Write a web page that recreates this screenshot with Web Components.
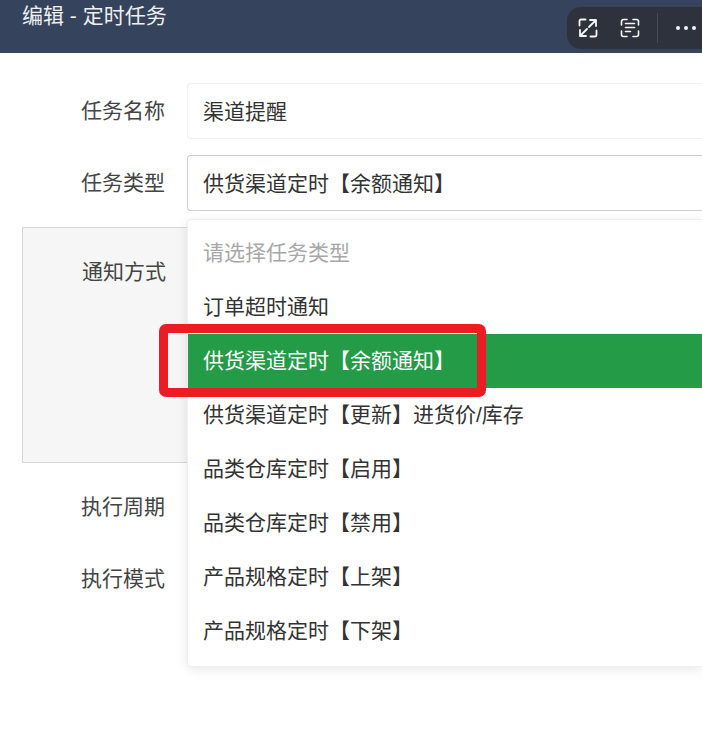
<!DOCTYPE html>
<html lang="zh">
<head>
<meta charset="utf-8">
<title>编辑 - 定时任务</title>
<style>
  html, body { margin: 0; height: 729px; overflow: hidden; background: #fff; }
  body { font-family: "Liberation Sans", "Noto Sans CJK SC", sans-serif; }
</style>
</head>
<body>
<task-dialog heading="编辑 - 定时任务">
  <window-tools slot="tools"></window-tools>
  <form-row label="任务名称"><text-field>渠道提醒</text-field></form-row>
  <form-row label="任务类型">
    <text-field active>供货渠道定时【余额通知】</text-field>
    <option-menu slot="overlay">
      <option-item muted>请选择任务类型</option-item>
      <option-item>订单超时通知</option-item>
      <option-item selected>供货渠道定时【余额通知】<mark-box></mark-box></option-item>
      <option-item>供货渠道定时【更新】进货价/库存</option-item>
      <option-item>品类仓库定时【启用】</option-item>
      <option-item>品类仓库定时【禁用】</option-item>
      <option-item>产品规格定时【上架】</option-item>
      <option-item>产品规格定时【下架】</option-item>
    </option-menu>
  </form-row>
  <notice-panel label="通知方式"></notice-panel>
  <form-row label="执行周期"><text-field></text-field></form-row>
  <form-row label="执行模式"><text-field></text-field></form-row>
</task-dialog>

<script>
class TaskDialog extends HTMLElement {
  constructor() {
    super();
    this.attachShadow({mode: "open"});
    this.shadowRoot.innerHTML = `
      <style>
        :host { display: block; width: 702px; position: relative; }
        header {
          height: 53px;
          box-sizing: border-box;
          padding: 0 22px;
          background: #36435c;
          color: #eef0f3;
          font-size: 21px;
          line-height: 32px;
        }
        main {
          box-sizing: border-box;
          padding: 30px 0 0 22px;
          display: flex;
          flex-direction: column;
          gap: 16px;
          width: 702px;
        }
        .tools { position: absolute; top: 7px; right: 0; }
      </style>
      <header><span id="heading"></span></header>
      <div class="tools"><slot name="tools"></slot></div>
      <main><slot></slot></main>
    `;
    this.shadowRoot.getElementById("heading").textContent = this.getAttribute("heading");
  }
}

class WindowTools extends HTMLElement {
  constructor() {
    super();
    this.attachShadow({mode: "open"});
    this.shadowRoot.innerHTML = `
      <style>
        :host {
          display: flex;
          align-items: center;
          box-sizing: border-box;
          width: 135px;
          height: 42px;
          padding-left: 11px;
          border-radius: 14px 0 0 14px;
          background: #2d323c;
          color: #f4f5f6;
        }
        svg { display: block; width: 20px; height: 20px; fill: none; stroke: currentColor; stroke-width: 1.8; stroke-linecap: round; stroke-linejoin: round; }
        .scan { margin-left: 22px; stroke-width: 1.6; }
        .line { width: 1px; height: 30px; margin-left: 17px; background: #474c56; }
        .dots { margin-left: 18px; display: flex; gap: 4px; }
        .dots i { width: 4px; height: 4px; border-radius: 50%; background: currentColor; }
      </style>
      <svg viewBox="0 0 20 20">
        <path d="M7.500 1.500H3A1.500 1.500 0 0 0 1.500 3V7.500"/>
        <path d="M12.500 18.500H17A1.500 1.500 0 0 0 18.500 17V12.500"/>
        <path d="M12 2H18V8M18 2l-7 7"/>
        <path d="M8 18H2V12M2 18l7-7"/>
      </svg>
      <svg class="scan" viewBox="0 0 20 20">
        <path d="M1.500 7V3.500a2 2 0 0 1 2-2H7M13 1.500h3.500a2 2 0 0 1 2 2V7M18.500 13v3.500a2 2 0 0 1-2 2H13M7 18.500H3.500a2 2 0 0 1-2-2V13"/>
        <path d="M5.500 5.500h9M5.500 9.500h9M5.500 13.500h5"/>
      </svg>
      <div class="line"></div>
      <div class="dots"><i></i><i></i><i></i></div>
    `;
  }
}

class FormRow extends HTMLElement {
  constructor() {
    super();
    this.attachShadow({mode: "open"});
    this.shadowRoot.innerHTML = `
      <style>
        :host { display: flex; align-items: center; position: relative; }
        label {
          width: 143px;
          margin-right: 22px;
          flex: none;
          text-align: right;
          color: #444;
          font-size: 21px;
          line-height: 56px;
        }
        .field { flex: 1; position: relative; min-height: 56px; }
      </style>
      <label></label>
      <div class="field"><slot></slot><slot name="overlay"></slot></div>
    `;
    this.shadowRoot.querySelector("label").textContent = this.getAttribute("label");
  }
}

class TextField extends HTMLElement {
  constructor() {
    super();
    this.attachShadow({mode: "open"});
    this.shadowRoot.innerHTML = `
      <style>
        :host {
          display: block;
          box-sizing: border-box;
          height: 56px;
          padding: 0 15px;
          border: 1px solid #efefef;
          border-right: 0;
          border-radius: 4px 0 0 4px;
          background: #fff;
          color: #333;
          font-size: 21px;
          line-height: 56px;
        }
        :host([active]) { border-color: #cfcfcf; }
      </style>
      <slot></slot>
    `;
  }
}

class OptionMenu extends HTMLElement {
  constructor() {
    super();
    this.attachShadow({mode: "open"});
    this.shadowRoot.innerHTML = `
      <style>
        :host {
          display: block;
          position: absolute;
          z-index: 2;
          top: 64px;
          left: 0;
          right: 0;
          box-sizing: border-box;
          padding: 6px 0 8px;
          border: 1px solid #f0f0f0;
          border-right: 0;
          border-radius: 4px 0 0 4px;
          background: #fff;
          box-shadow: 0 2px 12px rgba(0, 0, 0, .1);
        }
      </style>
      <slot></slot>
    `;
  }
}

class OptionItem extends HTMLElement {
  constructor() {
    super();
    this.attachShadow({mode: "open"});
    this.shadowRoot.innerHTML = `
      <style>
        :host {
          display: block;
          position: relative;
          height: 54px;
          padding: 0 15px;
          color: #333;
          font-size: 21px;
          line-height: 54px;
          white-space: nowrap;
        }
        :host([muted]) { color: #a8a8a8; }
        :host([selected]) { background: #239b47; color: #fff; }
      </style>
      <slot></slot>
    `;
  }
}

class MarkBox extends HTMLElement {
  constructor() {
    super();
    this.attachShadow({mode: "open"});
    this.shadowRoot.innerHTML = `
      <style>
        :host {
          position: absolute;
          top: -10px;
          left: -29px;
          width: 327px;
          height: 73px;
          box-sizing: border-box;
          border: 9px solid #ec1c24;
          border-radius: 7px;
        }
      </style>
    `;
  }
}

class NoticePanel extends HTMLElement {
  constructor() {
    super();
    this.attachShadow({mode: "open"});
    this.shadowRoot.innerHTML = `
      <style>
        :host {
          display: block;
          box-sizing: border-box;
          height: 236px;
          padding-top: 16px;
          border: 1px solid #d6d6d6;
          border-right: 0;
          background: #f6f6f6;
          color: #444;
          font-size: 21px;
          line-height: 56px;
        }
        span { display: block; width: 143px; text-align: right; }
      </style>
      <span></span>
    `;
    this.shadowRoot.querySelector("span").textContent = this.getAttribute("label");
  }
}

customElements.define("task-dialog", TaskDialog);
customElements.define("window-tools", WindowTools);
customElements.define("form-row", FormRow);
customElements.define("text-field", TextField);
customElements.define("option-menu", OptionMenu);
customElements.define("option-item", OptionItem);
customElements.define("mark-box", MarkBox);
customElements.define("notice-panel", NoticePanel);
</script>
</body>
</html>
